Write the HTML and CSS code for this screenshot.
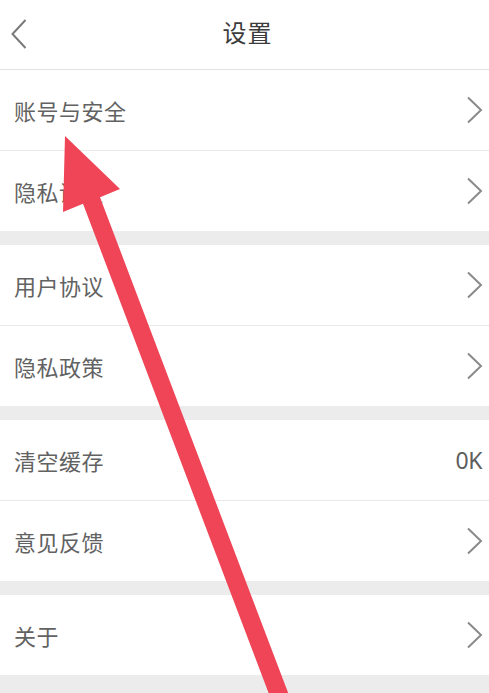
FILE: index.html
```html
<!DOCTYPE html>
<html lang="zh">
<head>
<meta charset="utf-8">
<title>设置</title>
<link rel="stylesheet" href="styles.css">
</head>
<body>
<div class="page">
  <header class="topbar">
    <div class="back">
      <svg width="16" height="30" viewBox="0 0 16 30"><path d="M14.5 1 L1.5 15 L14.5 29" fill="none" stroke="#7a7a7a" stroke-width="2"/></svg>
    </div>
    <div class="title">设置</div>
    <div class="spacer"></div>
  </header>

  <section class="group">
    <div class="row"><span class="label">账号与安全</span><svg class="chev" width="17" height="28" viewBox="0 0 17 28"><path d="M2 1.5 L15 14 L2 26.5" fill="none" stroke="#8a8a8a" stroke-width="2"/></svg></div>
    <div class="row"><span class="label">隐私设置</span><svg class="chev" width="17" height="28" viewBox="0 0 17 28"><path d="M2 1.5 L15 14 L2 26.5" fill="none" stroke="#8a8a8a" stroke-width="2"/></svg></div>
  </section>

  <section class="group">
    <div class="row"><span class="label">用户协议</span><svg class="chev" width="17" height="28" viewBox="0 0 17 28"><path d="M2 1.5 L15 14 L2 26.5" fill="none" stroke="#8a8a8a" stroke-width="2"/></svg></div>
    <div class="row"><span class="label">隐私政策</span><svg class="chev" width="17" height="28" viewBox="0 0 17 28"><path d="M2 1.5 L15 14 L2 26.5" fill="none" stroke="#8a8a8a" stroke-width="2"/></svg></div>
  </section>

  <section class="group">
    <div class="row"><span class="label">清空缓存</span><span class="value">0K</span></div>
    <div class="row"><span class="label">意见反馈</span><svg class="chev" width="17" height="28" viewBox="0 0 17 28"><path d="M2 1.5 L15 14 L2 26.5" fill="none" stroke="#8a8a8a" stroke-width="2"/></svg></div>
  </section>

  <section class="group">
    <div class="row"><span class="label">关于</span><svg class="chev" width="17" height="28" viewBox="0 0 17 28"><path d="M2 1.5 L15 14 L2 26.5" fill="none" stroke="#8a8a8a" stroke-width="2"/></svg></div>
  </section>

  <svg class="arrow" width="489" height="693" viewBox="0 0 489 693">
    <polygon points="65,136 120,189 100,197.3 288.2,693 268.6,693 83,203.7 63,212" fill="#ef4557"/>
  </svg>
</div>
</body>
</html>
```

FILE: styles.css
```css
html, body {
  margin: 0;
  padding: 0;
  background: #ececec;
}
.page {
  position: relative;
  width: 489px;
  height: 693px;
  overflow: hidden;
  background: #ececec;
  font-family: "Noto Sans CJK SC", "Noto Sans", sans-serif;
}
.topbar {
  height: 69px;
  background: #fff;
  border-bottom: 1px solid #e2e2e2;
  display: grid;
  grid-template-columns: 1fr auto 1fr;
  align-items: center;
}
.back {
  padding-left: 11px;
  display: flex;
  align-items: center;
  padding-bottom: 1px;
}
.title {
  font-size: 24px;
  color: #3c3c3c;
  letter-spacing: 1px;
  padding-left: 6px;
  padding-bottom: 6px;
}
.group {
  background: #fff;
  margin-bottom: 14px;
}
.row {
  height: 80px;
  display: flex;
  align-items: center;
  justify-content: space-between;
  padding: 0 6px 0 14px;
}
.row + .row {
  border-top: 1px solid #e9e9e9;
}
.label {
  font-size: 22px;
  color: #626262;
  letter-spacing: 0.5px;
}
.value {
  font-family: "Noto Sans", sans-serif;
  font-size: 23px;
  color: #5e5e5e;
  letter-spacing: -0.5px;
  padding-right: 1px;
}
.chev {
  display: block;
}
.arrow {
  position: absolute;
  left: 0;
  top: 0;
  pointer-events: none;
}
```
